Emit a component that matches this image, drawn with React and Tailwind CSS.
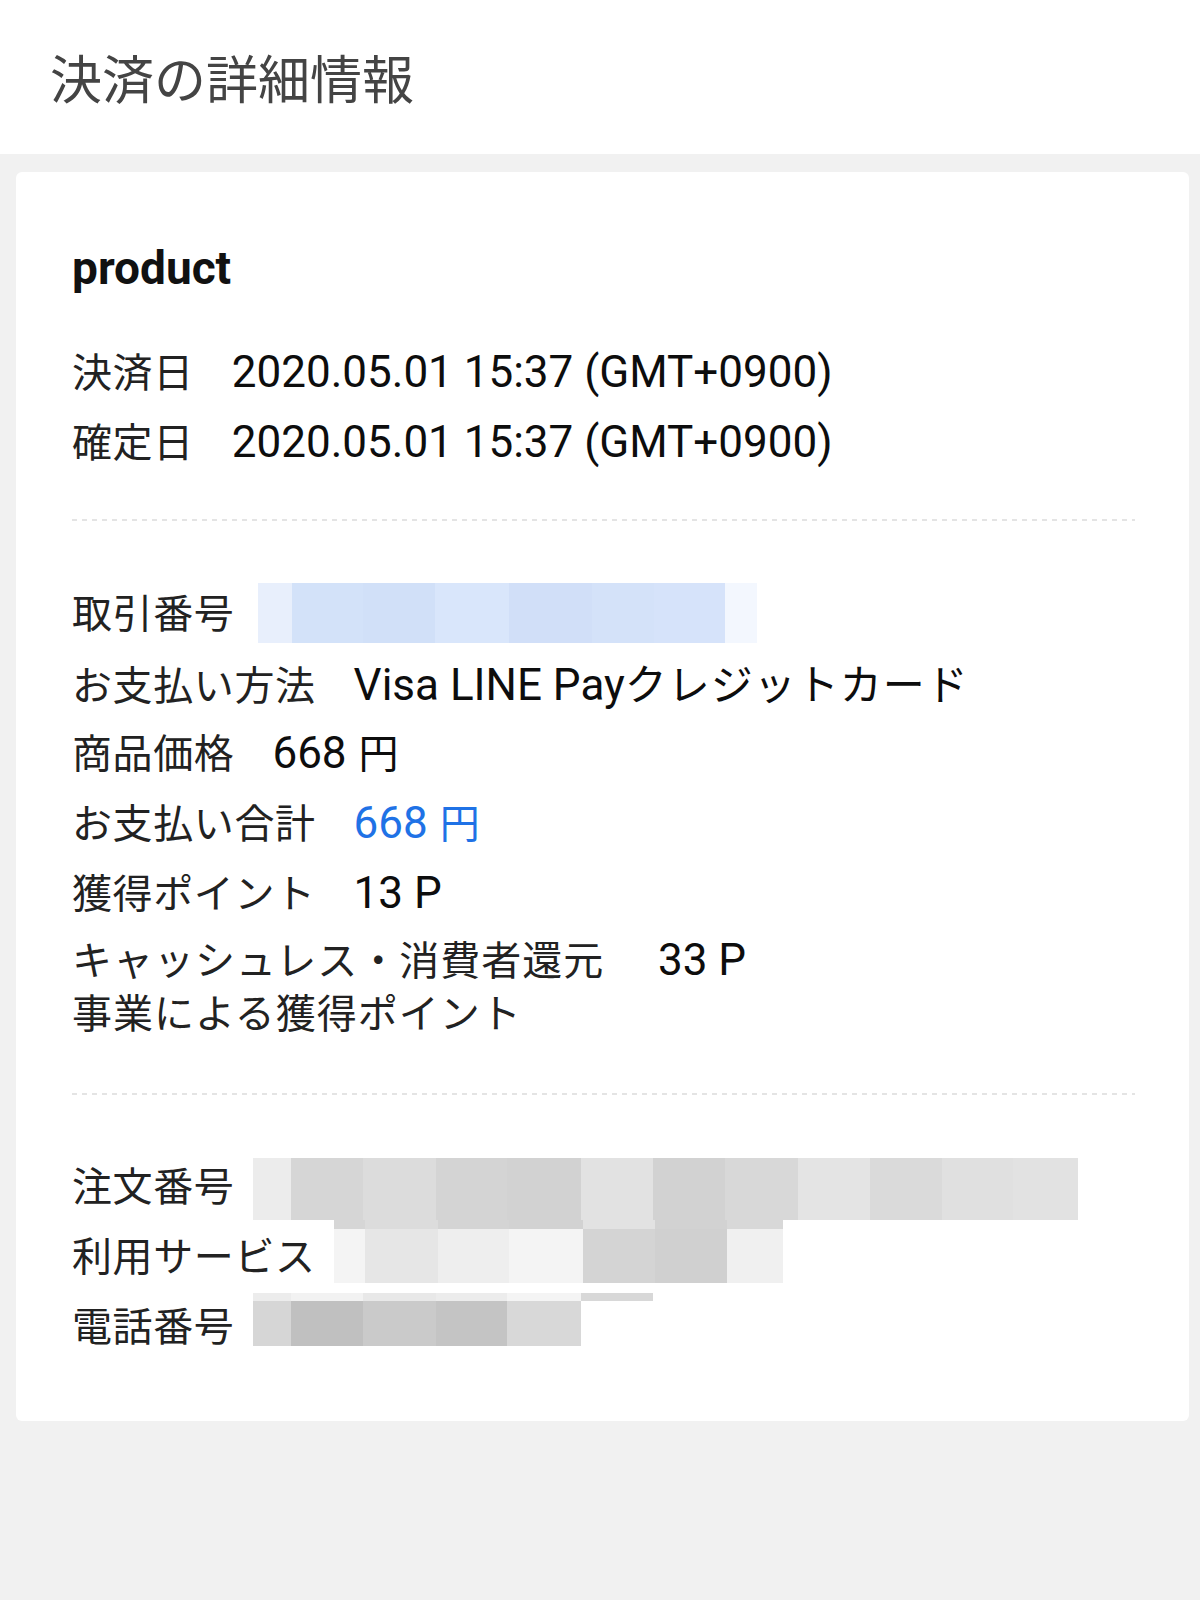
const cjk = "font-['Noto_Sans_CJK_JP',sans-serif]";
const latin = "font-['Roboto','Noto_Sans_CJK_JP',sans-serif]";

// pixelated blocks that hide private values
const txMosaic = [
  {
    h: 'h-[60px]',
    cells: [
      ['w-[34px]', 'bg-[#e8effc]'],
      ['w-[71px]', 'bg-[#d3e2f9]'],
      ['w-[72px]', 'bg-[#d1e0f8]'],
      ['w-[74px]', 'bg-[#d9e6fb]'],
      ['w-[83px]', 'bg-[#d1dff8]'],
      ['w-[62px]', 'bg-[#d4e2f9]'],
      ['w-[71px]', 'bg-[#d6e3fa]'],
      ['w-[32px]', 'bg-[#f3f7fe]'],
    ],
  },
];

const orderMosaic = [
  {
    h: 'h-[62px]',
    cells: [
      ['w-[38px]', 'bg-[#ececec]'],
      ['w-[72px]', 'bg-[#d6d6d6]'],
      ['w-[73px]', 'bg-[#dcdcdc]'],
      ['w-[71px]', 'bg-[#d4d4d4]'],
      ['w-[74px]', 'bg-[#d2d2d2]'],
      ['w-[72px]', 'bg-[#e2e2e2]'],
      ['w-[72px]', 'bg-[#d2d2d2]'],
      ['w-[73px]', 'bg-[#d8d8d8]'],
      ['w-[72px]', 'bg-[#e4e4e4]'],
      ['w-[72px]', 'bg-[#dadada]'],
      ['w-[71px]', 'bg-[#e0e0e0]'],
      ['w-[65px]', 'bg-[#e2e2e2]'],
    ],
  },
];

const serviceMosaic = [
  {
    h: 'h-[9px]',
    cells: [
      ['w-[31px]', 'bg-[#d6d6d6]'],
      ['w-[73px]', 'bg-[#dcdcdc]'],
      ['w-[71px]', 'bg-[#d4d4d4]'],
      ['w-[74px]', 'bg-[#d2d2d2]'],
      ['w-[72px]', 'bg-[#e2e2e2]'],
      ['w-[72px]', 'bg-[#d2d2d2]'],
      ['w-[56px]', 'bg-[#d8d8d8]'],
    ],
  },
  {
    h: 'h-[54px]',
    cells: [
      ['w-[31px]', 'bg-[#f4f4f4]'],
      ['w-[73px]', 'bg-[#e6e6e6]'],
      ['w-[71px]', 'bg-[#eeeeee]'],
      ['w-[74px]', 'bg-[#f4f4f4]'],
      ['w-[72px]', 'bg-[#d4d4d4]'],
      ['w-[72px]', 'bg-[#d0d0d0]'],
      ['w-[56px]', 'bg-[#f0f0f0]'],
    ],
  },
];

const phoneMosaic = [
  {
    h: 'h-[8px]',
    cells: [
      ['w-[38px]', 'bg-[#ececec]'],
      ['w-[72px]', 'bg-[#f2f2f2]'],
      ['w-[73px]', 'bg-[#e8e8e8]'],
      ['w-[71px]', 'bg-[#ececec]'],
      ['w-[74px]', 'bg-[#f4f4f4]'],
      ['w-[72px]', 'bg-[#d8d8d8]'],
    ],
  },
  {
    h: 'h-[45px]',
    cells: [
      ['w-[38px]', 'bg-[#d6d6d6]'],
      ['w-[72px]', 'bg-[#c0c0c0]'],
      ['w-[73px]', 'bg-[#cacaca]'],
      ['w-[71px]', 'bg-[#c4c4c4]'],
      ['w-[74px]', 'bg-[#d8d8d8]'],
    ],
  },
];

function Mosaic({ rows, className }) {
  return (
    <div className={`flex flex-col ${className}`}>
      {rows.map((row, i) => (
        <div key={i} className={`flex ${row.h}`}>
          {row.cells.map(([w, bg], j) => (
            <div key={j} className={`${w} ${bg} shrink-0`} />
          ))}
        </div>
      ))}
    </div>
  );
}

function Label({ children, className = '' }) {
  return (
    <span className={`${cjk} text-[40px] leading-none tracking-[0.6px] text-[#222] shrink-0 ${className}`}>
      {children}
    </span>
  );
}

function Row({ label, children }) {
  return (
    <div className="flex items-baseline h-[70px] pt-[13px]">
      <Label>{label}</Label>
      <span className={`${latin} text-[44px] leading-none text-[#0d0d0d] ml-[38px] whitespace-nowrap`}>
        {children}
      </span>
    </div>
  );
}

function MosaicRow({ label, rows, className }) {
  return (
    <div className="flex items-start h-[70px] pt-[13px]">
      <Label>{label}</Label>
      <Mosaic rows={rows} className={className} />
    </div>
  );
}

function Yen() {
  return <span className={`${cjk} text-[40px] leading-none ml-[12px]`}>円</span>;
}

function Dashed({ className }) {
  return (
    <div
      className={`h-[2px] bg-[linear-gradient(to_right,#e4e4e4_50%,transparent_50%)] bg-[length:10px_2px] ${className}`}
    />
  );
}

export default function App() {
  return (
    <div className="min-h-[1600px] bg-[#f1f1f1]">
      <header className="h-[154px] bg-white flex items-center pl-[50px]">
        <h1 className={`${cjk} text-[52px] leading-none text-[#444] font-normal`}>決済の詳細情報</h1>
      </header>

      <div className="pt-[18px] ml-4 mr-[11px]">
        <div className="bg-white rounded-[6px] pt-[73px] pb-[60px] pl-[56px] pr-[54px]">
          <div className={`${latin} text-[46px] leading-none font-bold text-[#111]`}>product</div>

          <div className="mt-[46px]">
            <Row label="決済日">2020.05.01 15:37 (GMT+0900)</Row>
            <Row label="確定日">2020.05.01 15:37 (GMT+0900)</Row>
          </div>

          <Dashed className="mt-[42px]" />

          <div className="mt-[57px]">
            <MosaicRow label="取引番号" rows={txMosaic} className="ml-[24px] mt-[-8px]" />
            <Row label="お支払い方法">
              Visa LINE Pay
              <span className={`${cjk} text-[42px] leading-none tracking-[1px]`}>クレジットカード</span>
            </Row>
            <Row label="商品価格">
              668
              <Yen />
            </Row>
            <Row label="お支払い合計">
              <span className="text-[#1f72e6]">
                668
                <Yen />
              </span>
            </Row>
            <Row label="獲得ポイント">13 P</Row>
            <div className="flex items-baseline mt-[4px]">
              <span className={`${cjk} text-[40px] leading-[53px] tracking-[1px] text-[#222] w-[548px] shrink-0`}>
                キャッシュレス・消費者還元
                <br />
                事業による獲得ポイント
              </span>
              <span className={`${latin} text-[44px] leading-[53px] text-[#0d0d0d] ml-[38px]`}>33 P</span>
            </div>
          </div>

          <Dashed className="mt-[55px]" />

          <div className="mt-[56px]">
            <MosaicRow label="注文番号" rows={orderMosaic} className="ml-[19px] mt-[-6px]" />
            <MosaicRow label="利用サービス" rows={serviceMosaic} className="ml-[18px] mt-[-14px]" />
            <MosaicRow label="電話番号" rows={phoneMosaic} className="ml-[19px] mt-[-11px]" />
          </div>
        </div>
      </div>
    </div>
  );
}
